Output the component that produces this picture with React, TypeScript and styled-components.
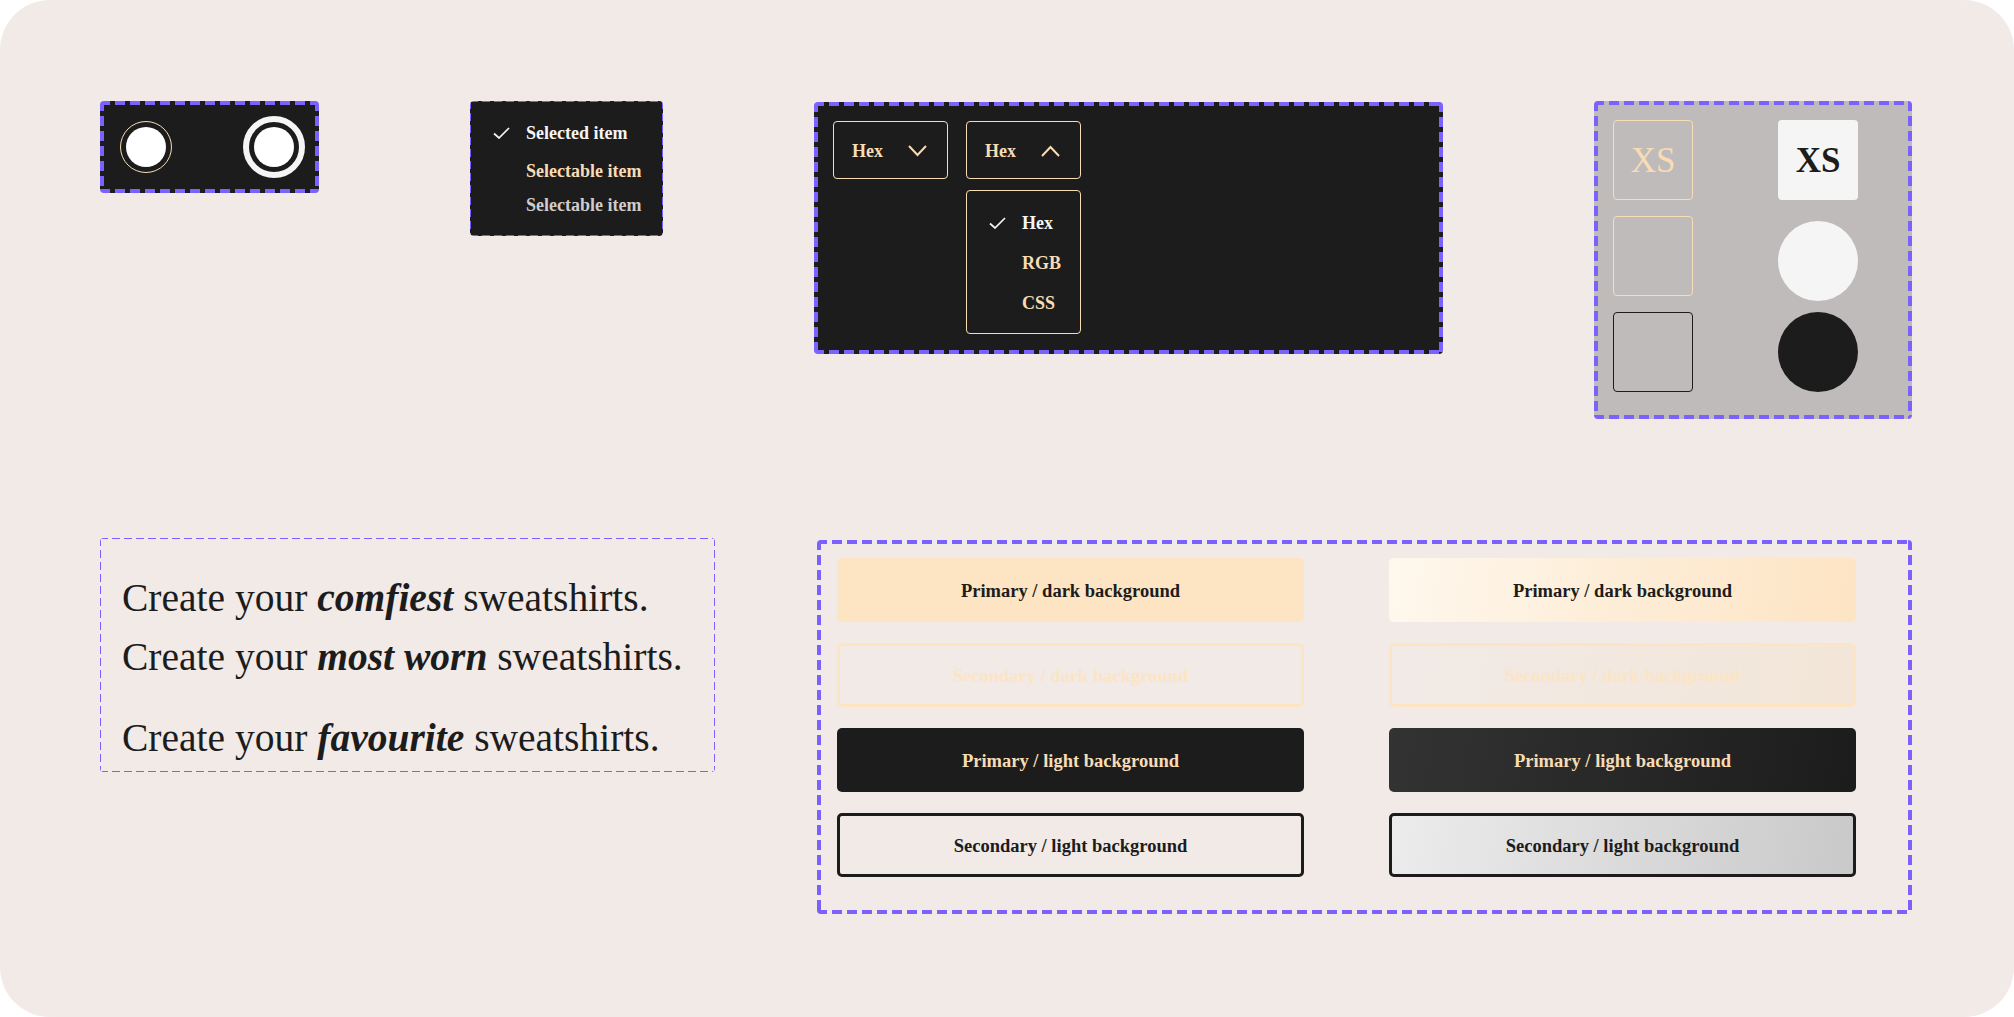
import React from "react";
import styled, { createGlobalStyle, css } from "styled-components";

const purple = "#7b61ff";
const ink = "#1c1c1c";
const peach = "#fde4c3";
const beige = "#f7dcb6";
const paper = "#f1eae7";
const serif = `"Liberation Serif", "DejaVu Serif", serif`;

const GlobalStyle = createGlobalStyle`
  html, body {
    margin: 0;
    background: #ffffff;
  }
  * {
    box-sizing: border-box;
  }
`;

// dashed frame drawn with gradients so the dash/gap lengths match the figma look
const dashedFrame = (w: number, dash: number, gap: number) => css`
  background-image: linear-gradient(90deg, ${purple} ${dash}px, transparent ${dash}px),
    linear-gradient(90deg, ${purple} ${dash}px, transparent ${dash}px),
    linear-gradient(180deg, ${purple} ${dash}px, transparent ${dash}px),
    linear-gradient(180deg, ${purple} ${dash}px, transparent ${dash}px);
  background-size: ${dash + gap}px ${w}px, ${dash + gap}px ${w}px, ${w}px ${dash + gap}px,
    ${w}px ${dash + gap}px;
  background-position: 0 0, 0 100%, 0 0, 100% 0;
  background-repeat: repeat-x, repeat-x, repeat-y, repeat-y;
`;

const Page = styled.div`
  width: 2014px;
  height: 1017px;
  border-radius: 50px;
  background: ${paper};
  padding: 101px 100px;
  font-family: ${serif};
  display: flex;
  flex-direction: column;
  gap: 119px;
`;

const Row = styled.div<{ $gap: number }>`
  display: flex;
  align-items: flex-start;
  gap: ${(p) => p.$gap}px;
`;

const Frame = styled.div<{ $bg: string; $w: number; $thin?: boolean }>`
  width: ${(p) => p.$w}px;
  border-radius: 4px;
  background-color: ${(p) => p.$bg};
  ${(p) => (p.$thin ? dashedFrame(1, 8, 4) : dashedFrame(4, 10, 5))}
`;

/* radios */
const RadioFrame = styled(Frame)`
  height: 92px;
  display: flex;
  align-items: center;
  padding-left: 20px;
  gap: 71px;
`;

const Radio = styled.div<{ $on?: boolean }>`
  width: ${(p) => (p.$on ? 62 : 52)}px;
  height: ${(p) => (p.$on ? 62 : 52)}px;
  border-radius: 50%;
  border: ${(p) => (p.$on ? "6px solid #f5f5f5" : `1px solid ${beige}`)};
  display: flex;
  align-items: center;
  justify-content: center;
`;

const Dot = styled.div`
  width: 40px;
  height: 40px;
  border-radius: 50%;
  background: #ffffff;
`;

/* small menu */
const MenuFrame = styled(Frame)`
  height: 135px;
  padding: 15px 0 0 23px;
`;

const MenuItem = styled.div<{ $tone: "white" | "beige" | "grey"; $gapAfter?: number }>`
  display: flex;
  align-items: center;
  height: 34px;
  margin-bottom: ${(p) => p.$gapAfter || 0}px;
  font-size: 18px;
  font-weight: 700;
  color: ${(p) => (p.$tone === "white" ? "#f5f5f5" : p.$tone === "beige" ? beige : "#cfcccb")};
`;

const CheckSlot = styled.span`
  width: 33px;
  display: flex;
  align-items: center;
`;

const Check = () => (
  <svg width="17" height="12" viewBox="0 0 17 12">
    <polyline points="1,6.5 6,11 16,1" fill="none" stroke="#f5f5f5" strokeWidth="1.7" />
  </svg>
);

/* colour format select */
const SelectFrame = styled(Frame)`
  height: 252px;
  margin-top: 1px;
  padding: 19px;
  display: flex;
  gap: 18px;
  align-items: flex-start;
`;

const SelectCol = styled.div`
  display: flex;
  flex-direction: column;
  gap: 11px;
`;

const SelectBox = styled.div`
  width: 115px;
  height: 58px;
  border: 1px solid ${beige};
  border-radius: 4px;
  display: flex;
  align-items: center;
  justify-content: space-between;
  padding: 2px 20px 0 18px;
  font-size: 18px;
  font-weight: 700;
  color: ${beige};
`;

const Chevron = ({ up }: { up?: boolean }) => (
  <svg width="19" height="12" viewBox="0 0 19 12">
    <polyline
      points={up ? "1,11 9.5,2 18,11" : "1,1 9.5,10 18,1"}
      fill="none"
      stroke={beige}
      strokeWidth="2"
    />
  </svg>
);

const OptionList = styled.div`
  width: 115px;
  height: 144px;
  border: 1px solid ${beige};
  border-radius: 4px;
  padding: 12px 0 0 22px;
`;

const Option = styled.div<{ $active?: boolean }>`
  display: flex;
  align-items: center;
  height: 40px;
  font-size: 18px;
  font-weight: 700;
  color: ${(p) => (p.$active ? "#f5f5f5" : beige)};
`;

/* sizes */
const SizeFrame = styled(Frame)`
  height: 318px;
  padding: 19px;
  display: grid;
  grid-template-columns: 80px 80px;
  grid-auto-rows: 80px;
  column-gap: 85px;
  row-gap: 16px;
`;

const SizeTile = styled.div<{ $kind: "outline" | "ink" | "filled" }>`
  border-radius: 4px;
  display: flex;
  align-items: center;
  justify-content: center;
  padding-top: 2px;
  font-size: 35px;
  ${(p) =>
    p.$kind === "filled"
      ? css`
          background: #f5f5f5;
          color: ${ink};
          font-weight: 700;
        `
      : css`
          border: 1px solid ${p.$kind === "ink" ? ink : beige};
          color: ${beige};
        `}
`;

const Swatch = styled.div<{ $color: string; $shift?: number }>`
  border-radius: 50%;
  background: ${(p) => p.$color};
  transform: translateY(${(p) => p.$shift || 0}px);
`;

/* headline copy */
const CopyFrame = styled(Frame)`
  height: 234px;
  padding: 31px 22px 0;
  color: ${ink};
`;

const Line = styled.p<{ $gapTop?: number }>`
  margin: ${(p) => p.$gapTop || 0}px 0 0;
  font-size: 39.5px;
  line-height: 59px;
  white-space: nowrap;

  em {
    font-weight: 700;
  }
`;

/* buttons */
const ButtonFrame = styled(Frame)`
  margin-top: 2px;
  padding: 18px 56px 37px 20px;
  display: grid;
  grid-template-columns: 467px 467px;
  grid-auto-rows: 64px;
  column-gap: 85px;
  row-gap: 21px;
`;

type Variant = "primaryDark" | "secondaryDark" | "primaryLight" | "secondaryLight";

const looks: Record<Variant, { flat: ReturnType<typeof css>; glossy: ReturnType<typeof css> }> = {
  primaryDark: {
    flat: css`
      background: ${peach};
      color: ${ink};
    `,
    glossy: css`
      background: linear-gradient(100deg, #fff8ee 0%, #fdeed9 45%, ${peach} 100%);
      color: ${ink};
    `,
  },
  secondaryDark: {
    flat: css`
      border: 3px solid ${peach};
      color: ${peach};
    `,
    glossy: css`
      border: 3px solid ${peach};
      background: linear-gradient(100deg, #f1eae6 0%, #f3e6d8 100%);
      color: ${peach};
    `,
  },
  primaryLight: {
    flat: css`
      background: ${ink};
      color: ${beige};
    `,
    glossy: css`
      background: linear-gradient(100deg, #333333 0%, #1c1c1c 100%);
      color: ${beige};
    `,
  },
  secondaryLight: {
    flat: css`
      border: 3px solid ${ink};
      color: ${ink};
    `,
    glossy: css`
      border: 3px solid ${ink};
      background: linear-gradient(100deg, #ececec 0%, #c9c9c9 100%);
      color: ${ink};
    `,
  },
};

const Button = styled.button<{ $variant: Variant; $glossy?: boolean }>`
  border: 0;
  background: transparent;
  border-radius: 5px;
  font-family: ${serif};
  font-size: 18.5px;
  font-weight: 700;
  padding: 2px 0 0;
  ${(p) => (p.$glossy ? looks[p.$variant].glossy : looks[p.$variant].flat)}
`;

const buttonRows: { variant: Variant; label: string }[] = [
  { variant: "primaryDark", label: "Primary / dark background" },
  { variant: "secondaryDark", label: "Secondary  / dark background" },
  { variant: "primaryLight", label: "Primary / light background" },
  { variant: "secondaryLight", label: "Secondary / light background" },
];

export default function App() {
  return (
    <>
      <GlobalStyle />
      <Page>
        <Row $gap={151}>
          <RadioFrame $bg={ink} $w={219}>
            <Radio>
              <Dot />
            </Radio>
            <Radio $on>
              <Dot />
            </Radio>
          </RadioFrame>

          <MenuFrame $bg={ink} $w={193} $thin>
            <MenuItem $tone="white" $gapAfter={4}>
              <CheckSlot>
                <Check />
              </CheckSlot>
              Selected item
            </MenuItem>
            <MenuItem $tone="beige">
              <CheckSlot />
              Selectable item
            </MenuItem>
            <MenuItem $tone="grey">
              <CheckSlot />
              Selectable item
            </MenuItem>
          </MenuFrame>

          <SelectFrame $bg={ink} $w={629}>
            <SelectCol>
              <SelectBox>
                Hex
                <Chevron />
              </SelectBox>
            </SelectCol>
            <SelectCol>
              <SelectBox>
                Hex
                <Chevron up />
              </SelectBox>
              <OptionList>
                <Option $active>
                  <CheckSlot>
                    <Check />
                  </CheckSlot>
                  Hex
                </Option>
                <Option>
                  <CheckSlot />
                  RGB
                </Option>
                <Option>
                  <CheckSlot />
                  CSS
                </Option>
              </OptionList>
            </SelectCol>
          </SelectFrame>

          <SizeFrame $bg="#bfbbba" $w={318}>
            <SizeTile $kind="outline">XS</SizeTile>
            <SizeTile $kind="filled">XS</SizeTile>
            <SizeTile $kind="outline" />
            <Swatch $color="#f5f5f5" $shift={5} />
            <SizeTile $kind="ink" />
            <Swatch $color={ink} />
          </SizeFrame>
        </Row>

        <Row $gap={102}>
          <CopyFrame $bg={paper} $w={615} $thin>
            <Line>
              Create your <em>comfiest</em> sweatshirts.
            </Line>
            <Line>
              Create your <em>most worn</em> sweatshirts.
            </Line>
            <Line $gapTop={22}>
              Create your <em>favourite</em> sweatshirts.
            </Line>
          </CopyFrame>

          <ButtonFrame $bg={paper} $w={1095}>
            {buttonRows.map((row) => (
              <React.Fragment key={row.variant}>
                <Button $variant={row.variant}>{row.label}</Button>
                <Button $variant={row.variant} $glossy>
                  {row.label}
                </Button>
              </React.Fragment>
            ))}
          </ButtonFrame>
        </Row>
      </Page>
    </>
  );
}
